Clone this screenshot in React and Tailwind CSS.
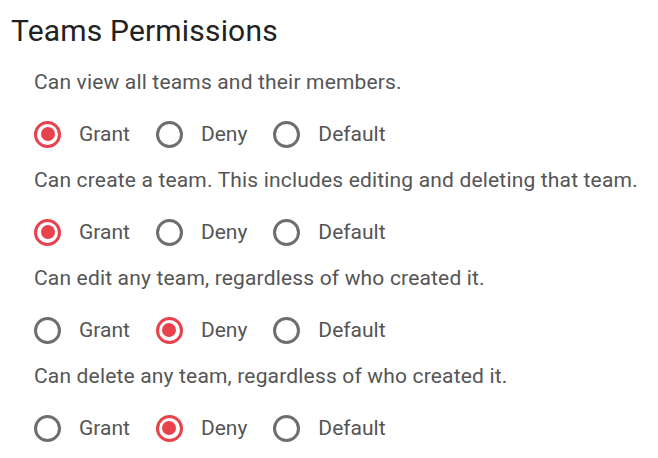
import React, { useState } from 'react';

const permissions = [
  { id: 'view', text: 'Can view all teams and their members.', value: 'grant' },
  { id: 'create', text: 'Can create a team. This includes editing and deleting that team.', value: 'grant' },
  { id: 'edit', text: 'Can edit any team, regardless of who created it.', value: 'deny' },
  { id: 'delete', text: 'Can delete any team, regardless of who created it.', value: 'deny' },
];

const options = [
  { value: 'grant', label: 'Grant' },
  { value: 'deny', label: 'Deny' },
  { value: 'default', label: 'Default' },
];

const Radio = ({ checked }) => (
  <span
    className={`flex items-center justify-center w-[27px] h-[27px] rounded-full border-[3px] ${
      checked ? 'border-[#e8424c]' : 'border-[#6e6e6e]'
    }`}
  >
    {checked && <span className="w-[14px] h-[14px] rounded-full bg-[#e8424c]" />}
  </span>
);

const App = () => {
  const [values, setValues] = useState(
    Object.fromEntries(permissions.map((p) => [p.id, p.value]))
  );

  return (
    <div className="bg-white w-[658px] h-[458px] pl-[11px] pt-[13px]" style={{ fontFamily: 'Roboto, sans-serif' }}>
      <h1 className="text-[30px] leading-[36px] tracking-[0.18px] text-[#222]">Teams Permissions</h1>

      <div className="pl-[23px] pt-[21px] flex flex-col">
        {permissions.map((p) => (
          <div key={p.id} className="flex flex-col pb-[20px]">
            <p className="text-[21px] leading-[24px] tracking-[0.17px] text-[#555]">{p.text}</p>
            <div className="flex items-center mt-[26px] h-[28px]">
              {options.map((o) => (
                <label
                  key={o.value}
                  className="flex items-center mr-[26px] cursor-pointer"
                  onClick={() => setValues({ ...values, [p.id]: o.value })}
                >
                  <Radio checked={values[p.id] === o.value} />
                  <span className="ml-[18px] text-[21px] leading-[24px] text-[#555]">{o.label}</span>
                </label>
              ))}
            </div>
          </div>
        ))}
      </div>
    </div>
  );
};

export default App;
